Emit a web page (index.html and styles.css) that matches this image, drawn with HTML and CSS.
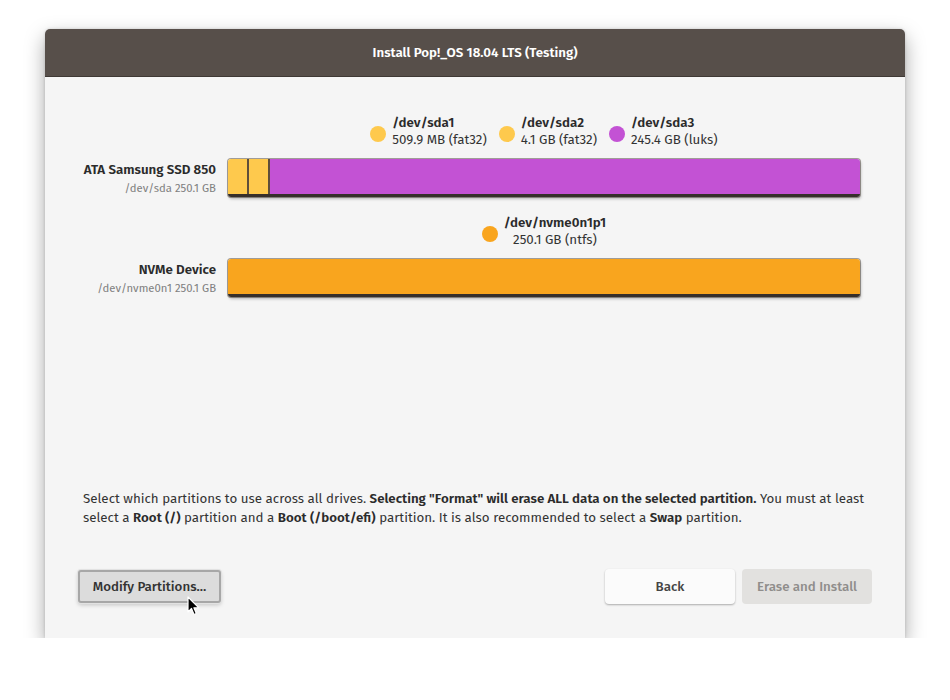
FILE: index.html
```html
<!DOCTYPE html>
<html>
<head>
<meta charset="utf-8">
<link rel="stylesheet" href="styles.css">
</head>
<body>
<div class="window">
  <div class="titlebar">Install Pop!_OS 18.04 LTS (Testing)</div>
  <div class="content">
    <div class="drives">
      <div class="drive first">
        <div class="spacer"></div>
        <div class="legend">
          <div class="item">
            <span class="dot yellow"></span>
            <div class="itext"><div class="iname">/dev/sda1</div><div class="isub">509.9 MB (fat32)</div></div>
          </div>
          <div class="item">
            <span class="dot yellow"></span>
            <div class="itext"><div class="iname">/dev/sda2</div><div class="isub">4.1 GB (fat32)</div></div>
          </div>
          <div class="item">
            <span class="dot purple"></span>
            <div class="itext"><div class="iname">/dev/sda3</div><div class="isub">245.4 GB (luks)</div></div>
          </div>
        </div>
        <div class="label"><div class="dname">ATA Samsung SSD 850</div><div class="dsub">/dev/sda 250.1 GB</div></div>
        <div class="bar">
          <div class="seg yellow" style="width:19px"></div>
          <div class="seg yellow" style="width:19px"></div>
          <div class="seg purple grow"></div>
        </div>
      </div>
      <div class="drive">
        <div class="spacer"></div>
        <div class="legend">
          <div class="item">
            <span class="dot orange"></span>
            <div class="itext center"><div class="iname">/dev/nvme0n1p1</div><div class="isub">250.1 GB (ntfs)</div></div>
          </div>
        </div>
        <div class="label"><div class="dname">NVMe Device</div><div class="dsub">/dev/nvme0n1 250.1 GB</div></div>
        <div class="bar">
          <div class="seg orange grow"></div>
        </div>
      </div>
    </div>
    <p class="info">Select which partitions to use across all drives. <b>Selecting "Format" will erase ALL data on the selected partition.</b> You must at least select a <b>Root (/)</b> partition and a <b>Boot (/boot/efi)</b> partition. It is also recommended to select a <b>Swap</b> partition.</p>
    <div class="actions">
      <div class="modify-wrap">
        <button class="btn modify">Modify Partitions…</button>
        <svg class="cursor" width="14" height="20" viewBox="0 0 14 20"><path d="M1 1 L1 16 L4.5 12.5 L7 18.5 L9.3 17.5 L6.9 11.8 L11.8 11.8 Z" fill="#000" stroke="#fff" stroke-width="1.2" stroke-linejoin="round"/></svg>
      </div>
      <div class="right">
        <button class="btn back">Back</button>
        <button class="btn erase">Erase and Install</button>
      </div>
    </div>
  </div>
</div>
</body>
</html>
```
FILE: styles.css
```css
html, body {
  margin: 0;
  padding: 0;
  background: #ffffff;
}
body {
  font-family: "Fira Sans", "Noto Sans", "Open Sans", sans-serif;
  color: #333333;
}
.window {
  margin: 29px 0 0 45px;
  width: 860px;
  height: 609px;
  background: #f5f5f5;
  border-radius: 5px 5px 0 0;
  box-shadow: 0 8px 20px rgba(0,0,0,0.35), 0 0 3px rgba(0,0,0,0.15);
  display: flex;
  flex-direction: column;
  overflow: hidden;
}
.titlebar {
  height: 48px;
  flex: none;
  background: #574f4a;
  color: #ffffff;
  font-weight: 600;
  font-size: 13.33px;
  display: flex;
  align-items: center;
  justify-content: center;
  box-shadow: inset 0 -1px 0 #3f3935;
}
.content {
  flex: 1;
  display: flex;
  flex-direction: column;
}
.drives {
  padding: 38px 45px 0 0;
  display: flex;
  flex-direction: column;
  gap: 18px;
}
.drive {
  display: grid;
  grid-template-columns: 171px 1fr;
  column-gap: 12px;
  row-gap: 10px;
}
.legend {
  display: flex;
  justify-content: center;
  gap: 12px;
}
.item {
  display: flex;
  align-items: center;
  gap: 6px;
}
.dot {
  width: 16px;
  height: 16px;
  border-radius: 50%;
  margin-top: 3px;
}
.itext {
  display: flex;
  flex-direction: column;
}
.itext.center {
  align-items: center;
}
.iname {
  font-weight: 600;
  font-size: 13.33px;
  line-height: 17px;
  color: #2b2b2b;
}
.isub {
  font-size: 13.33px;
  line-height: 17px;
  color: #333;
}
.label {
  text-align: right;
  padding-top: 2px;
}
.dname {
  font-weight: 600;
  font-size: 13.33px;
  line-height: 19px;
  color: #2b2b2b;
}
.dsub {
  font-size: 11.3px;
  line-height: 17px;
  color: #808080;
}
.bar {
  height: 35px;
  display: flex;
  border-radius: 3px;
  overflow: hidden;
  border-bottom: 3px solid #362f2b;
  box-shadow: 0 0 0 1px rgba(60,50,40,0.45), 1px 2px 3px rgba(0,0,0,0.25);
}
.seg {
  height: 100%;
}
.seg + .seg {
  border-left: 2px solid #5e4e3a;
}
.seg.grow {
  flex: 1;
}
.yellow { background: #fec94d; }
.purple { background: #c352d4; }
.orange { background: #f9a51e; }
.info {
  margin: auto 38px 0 38px;
  font-size: 13.33px;
  line-height: 19px;
  color: #333;
}
.info b {
  font-weight: 600;
  color: #2b2b2b;
}
.actions {
  margin: 41px 33px 34px 33px;
  display: flex;
  justify-content: space-between;
  align-items: center;
}
.modify-wrap {
  position: relative;
}
.btn {
  font-family: inherit;
  font-size: 13.33px;
  font-weight: 500;
  border: none;
  border-radius: 4px;
}
.modify {
  width: 143px;
  height: 33px;
  background: #dcdcdc;
  color: #333;
  border: 2px solid #a7a7a7;
  border-radius: 3px;
  box-shadow: 0 0 0 1px #e2e2e2, 0 2px 4px rgba(0,0,0,0.2);
}
.cursor {
  position: absolute;
  left: 109px;
  top: 26px;
}
.right {
  display: flex;
  gap: 7px;
}
.back, .erase {
  width: 130px;
  height: 35px;
}
.back {
  background: #fbfbfb;
  color: #444;
  box-shadow: 0 1px 2px rgba(0,0,0,0.3);
}
.erase {
  background: #e2e1df;
  color: #8f8d8b;
}
```
